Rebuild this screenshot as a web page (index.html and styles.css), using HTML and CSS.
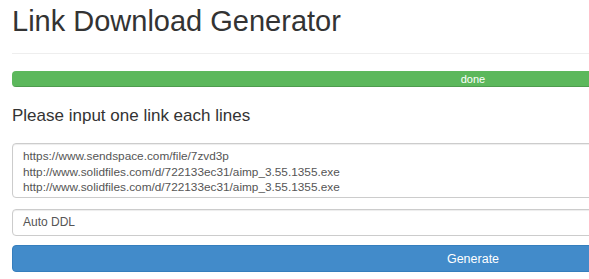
FILE: index.html
```html
<!DOCTYPE html>
<html>
<head>
<meta charset="utf-8">
<title>Link Download Generator</title>
<link rel="stylesheet" href="styles.css">
</head>
<body>
<div class="container">
  <h1 class="title">Link Download Generator</h1>
  <hr class="divider">
  <div class="progress"><div class="progress-bar">done</div></div>
  <h4 class="subtitle">Please input one link each lines</h4>
  <textarea class="links">https://www.sendspace.com/file/7zvd3p
http://www.solidfiles.com/d/722133ec31/aimp_3.55.1355.exe
http://www.solidfiles.com/d/722133ec31/aimp_3.55.1355.exe</textarea>
  <div class="select">Auto DDL</div>
  <button class="btn">Generate</button>
</div>
</body>
</html>
```
FILE: styles.css
```css
html, body {
  margin: 0;
  padding: 0;
  overflow: hidden;
  background: #fff;
}
body {
  font-family: "Liberation Sans", Arial, sans-serif;
  color: #333;
}
.container {
  width: 922px;
  margin-left: 12px;
  display: flex;
  flex-direction: column;
}
.title {
  font-size: 29px;
  font-weight: 400;
  line-height: 33px;
  margin: 5px 0 0;
  color: #333;
}
.divider {
  border: 0;
  border-top: 1px solid #eee;
  margin: 15px 0 17px;
  height: 0;
}
.progress {
  height: 16px;
  border-radius: 4px;
  background: #f5f5f5;
  overflow: hidden;
}
.progress-bar {
  height: 100%;
  background: #5cb85c;
  color: #fff;
  font-size: 11px;
  line-height: 16px;
  text-align: center;
  box-shadow: inset 0 -1px 0 rgba(0,0,0,0.15);
}
.subtitle {
  font-size: 17px;
  font-weight: 400;
  line-height: 20px;
  margin: 19px 0 17px;
  color: #333;
}
.links {
  box-sizing: border-box;
  height: 55px;
  width: 100%;
  border: 1px solid #ccc;
  border-radius: 4px;
  padding: 5px 10px 0;
  font-family: "Liberation Sans", Arial, sans-serif;
  font-size: 11.8px;
  line-height: 15.5px;
  color: #555;
  resize: none;
  overflow: hidden;
  margin: 0;
  box-shadow: inset 0 1px 1px rgba(0,0,0,0.075);
}
.select {
  box-sizing: border-box;
  height: 27px;
  margin-top: 11px;
  border: 1px solid #ccc;
  border-radius: 4px;
  padding: 0 10px;
  font-size: 12px;
  line-height: 25px;
  color: #555;
  box-shadow: inset 0 1px 1px rgba(0,0,0,0.075);
}
.btn {
  box-sizing: border-box;
  height: 27px;
  margin-top: 9px;
  width: 100%;
  background: #428bca;
  border: 1px solid #357ebd;
  border-radius: 4px;
  color: #fff;
  font-family: "Liberation Sans", Arial, sans-serif;
  font-size: 12.5px;
  padding: 0;
}
```
